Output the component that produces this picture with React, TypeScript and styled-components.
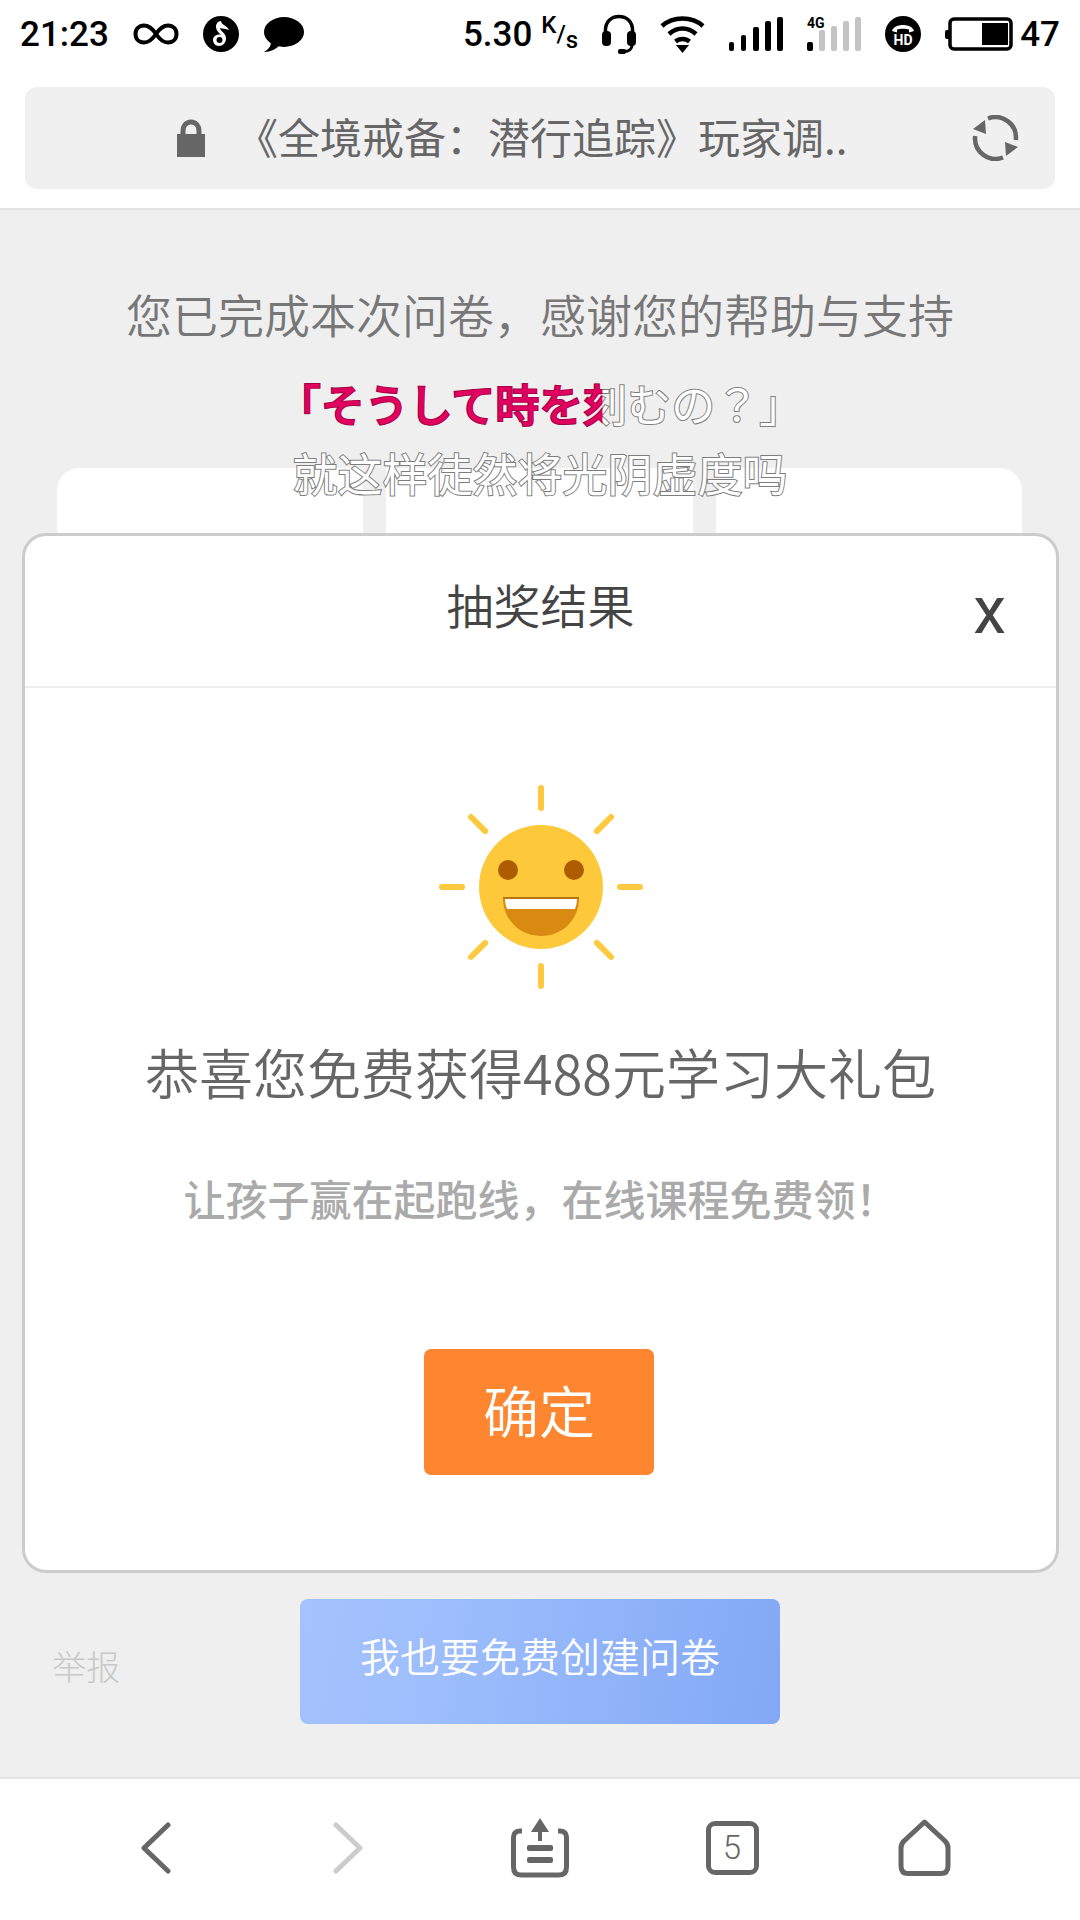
import React from "react"
import styled, { createGlobalStyle } from "styled-components"

const GlobalStyle = createGlobalStyle`
    html, body {
        margin: 0;
        padding: 0;
        background: #efefef;
    }

    * {
        box-sizing: border-box;
    }
`

const cjk = `"Noto Sans CJK SC", "Noto Sans", sans-serif`

function InfinityIcon() {
    return (
        <svg width="46" height="22" viewBox="0 0 46 22">
            <path d="M23 11C19 5 15 2.500 11 2.500C6 2.500 2.500 6 2.500 11C2.500 16 6 19.500 11 19.500C15 19.500 19 17 23 11C27 5 31 2.500 35 2.500C40 2.500 43.500 6 43.500 11C43.500 16 40 19.500 35 19.500C31 19.500 27 17 23 11Z" fill="none" stroke="#000" strokeWidth="4" />
        </svg>
    )
}

function MusicIcon() {
    return (
        <svg width="36" height="36" viewBox="0 0 36 36">
            <circle cx="18" cy="18" r="18" fill="#000" />
            <path d="M18 5C18 9 25 10 26 14C23 13 19 12.500 17 12C17 15 23 17 23 22.500C23 26.500 20 30 16 30C12.500 30 10 27 10 24C10 20.500 13 18 18 18.500C15 16.500 13 14 13 10.500C13 8 15 5 18 5Z" fill="#fff" />
            <circle cx="16.500" cy="24" r="3" fill="#000" />
        </svg>
    )
}

function ChatIcon() {
    return (
        <svg width="41" height="35" viewBox="0 0 41 35">
            <ellipse cx="21" cy="15" rx="20" ry="15" fill="#000" />
            <path d="M8 24C8 29 6 32 1 35C8 35 13 32 17 28Z" fill="#000" />
        </svg>
    )
}

function HeadsetIcon() {
    return (
        <svg width="34" height="40" viewBox="0 0 34 40">
            <path d="M3.500 18V16C3.500 8 9 2.500 17 2.500C25 2.500 30.500 8 30.500 16V18" fill="none" stroke="#000" strokeWidth="3.500" />
            <rect x="0" y="17" width="9" height="15" rx="4" fill="#000" />
            <rect x="25" y="17" width="9" height="15" rx="4" fill="#000" />
            <path d="M30 31C30 35 27 37.500 22 37.500H17" fill="none" stroke="#000" strokeWidth="3" />
            <rect x="16" y="35" width="8" height="5" rx="2" fill="#000" />
        </svg>
    )
}

function WifiIcon() {
    return (
        <svg width="45" height="38" viewBox="0 0 45 38">
            <path d="M2 11C13 1 32 1 43 11" fill="none" stroke="#000" strokeWidth="4.500" />
            <path d="M9 19C17 11.500 28 11.500 36 19" fill="none" stroke="#000" strokeWidth="4.500" />
            <path d="M15.500 26.500C19.500 23 25.500 23 29.500 26.500" fill="none" stroke="#000" strokeWidth="4.500" />
            <path d="M16 30H29L22.500 38Z" fill="#000" />
        </svg>
    )
}

function SignalIcon() {
    return (
        <svg width="54" height="34" viewBox="0 0 54 34">
            <rect x="0" y="25" width="5" height="9" rx="2" fill="#000" />
            <rect x="12" y="18" width="5" height="16" rx="2" fill="#000" />
            <rect x="24" y="10" width="6" height="24" rx="2" fill="#000" />
            <rect x="36" y="4" width="6" height="30" rx="2" fill="#000" />
            <rect x="48" y="0" width="6" height="34" rx="2" fill="#000" />
        </svg>
    )
}

function MobileDataIcon() {
    return (
        <svg width="54" height="34" viewBox="0 0 54 34" overflow="visible">
            <text x="0" y="11" fontFamily="Roboto, sans-serif" fontSize="14" fontWeight="700" fill="#000">4G</text>
            <rect x="0" y="25" width="6" height="9" rx="2" fill="#000" />
            <rect x="12" y="13" width="6" height="21" rx="2" fill="#c4c4c4" />
            <rect x="24" y="9" width="6" height="25" rx="2" fill="#c4c4c4" />
            <rect x="36" y="4" width="6" height="30" rx="2" fill="#c4c4c4" />
            <rect x="48" y="0" width="6" height="34" rx="2" fill="#c4c4c4" />
        </svg>
    )
}

function HdCallIcon() {
    return (
        <svg width="36" height="36" viewBox="0 0 36 36">
            <circle cx="18" cy="18" r="18" fill="#000" />
            <path d="M7 15C9 7 27 7 29 15L24 16.500V13.500C21 12.500 15 12.500 12 13.500V16.500Z" fill="#fff" />
            <text x="18" y="29" textAnchor="middle" fontFamily="Roboto, sans-serif" fontSize="14" fontWeight="700" fill="#fff">HD</text>
        </svg>
    )
}

function BatteryIcon() {
    return (
        <svg width="68" height="34" viewBox="0 0 68 34">
            <rect x="5" y="2" width="61" height="30" rx="4" fill="none" stroke="#000" strokeWidth="3.500" />
            <rect x="0" y="13" width="5" height="9" rx="2" fill="#000" />
            <rect x="37" y="6" width="26" height="22" fill="#000" />
        </svg>
    )
}

function LockIcon() {
    return (
        <svg width="28" height="38" viewBox="0 0 28 38">
            <path d="M6 17V12C6 7 9 3 14 3C19 3 22 7 22 12V17" fill="none" stroke="#666" strokeWidth="5" />
            <rect x="0" y="15" width="28" height="23" fill="#666" />
        </svg>
    )
}

function ReloadIcon() {
    return (
        <svg width="47" height="46" viewBox="0 0 47 46">
            <path d="M16 3.500A20.500 20.500 0 0 1 43.800 25" fill="none" stroke="#666" strokeWidth="4.500" />
            <path d="M31 42.500A20.500 20.500 0 0 1 3.200 21" fill="none" stroke="#666" strokeWidth="4.500" />
            <path d="M1 14L13 5L14 19Z" fill="#666" />
            <path d="M46 32L34 41L33 27Z" fill="#666" />
        </svg>
    )
}

function SunFace() {
    const rays = [0, 45, 90, 135, 180, 225, 270, 315]

    return (
        <svg width="210" height="210" viewBox="0 0 210 210">
            {rays.map((angle) => (
                <line
                    key={angle}
                    x1="105"
                    y1="6"
                    x2="105"
                    y2="26"
                    stroke="#fdc93f"
                    strokeWidth="6"
                    strokeLinecap="round"
                    transform={`rotate(${angle} 105 105)`}
                />
            ))}
            <circle cx="105" cy="105" r="62" fill="#fdc93b" />
            <circle cx="72" cy="88" r="10" fill="#ad5d00" />
            <circle cx="138" cy="88" r="10" fill="#ad5d00" />
            <path d="M67 116H143C143 138 126 154 105 154C84 154 67 138 67 116Z" fill="#d98a10" />
            <path d="M69 117H141C141 121 140 124 139 127H71C70 124 69 121 69 117Z" fill="#fff" />
            <path d="M67 116H143" stroke="#b9760e" strokeWidth="2" />
        </svg>
    )
}

function BackIcon() {
    return (
        <svg width="30" height="52" viewBox="0 0 30 52">
            <path d="M27 3L3 26L27 49" fill="none" stroke="#666" strokeWidth="5" strokeLinecap="round" strokeLinejoin="round" />
        </svg>
    )
}

function ForwardIcon() {
    return (
        <svg width="30" height="52" viewBox="0 0 30 52">
            <path d="M3 3L27 26L3 49" fill="none" stroke="#ccc" strokeWidth="5" strokeLinecap="round" strokeLinejoin="round" />
        </svg>
    )
}

function ShareIcon() {
    return (
        <svg width="58" height="60" viewBox="0 0 58 60">
            <path d="M29 0L38 14H20Z" fill="#666" />
            <rect x="27" y="12" width="4" height="11" fill="#666" />
            <path d="M11 13H9C5 13 2.500 15.500 2.500 19V49C2.500 54 5 57 10 57H48C53 57 55.500 54 55.500 49V19C55.500 15.500 53 13 49 13H47" fill="none" stroke="#666" strokeWidth="5" />
            <rect x="16" y="27" width="26" height="6" rx="2" fill="#666" />
            <rect x="16" y="39" width="26" height="6" rx="2" fill="#666" />
        </svg>
    )
}

function HomeIcon() {
    return (
        <svg width="53" height="57" viewBox="0 0 53 57">
            <path d="M26.500 3L47 22C49 24 50 26 50 29V47C50 52 48 54.500 43 54.500H10C5 54.500 3 52 3 47V29C3 26 4 24 6 22Z" fill="none" stroke="#666" strokeWidth="5" strokeLinejoin="round" />
        </svg>
    )
}

function App(): React.JSX.Element {
    return (
        <ScreenSCP>
            <GlobalStyle />

            <StatusBarSCP>
                <StatusGroupSCP>
                    <ClockSCP>21:23</ClockSCP>
                    <InfinityIcon />
                    <MusicIcon />
                    <ChatIcon />
                </StatusGroupSCP>
                <StatusGroupSCP>
                    <SpeedSCP>
                        5.30
                        <SpeedUnitSCP><sup>K</sup>/<sub>s</sub></SpeedUnitSCP>
                    </SpeedSCP>
                    <HeadsetIcon />
                    <WifiIcon />
                    <SignalIcon />
                    <MobileDataIcon />
                    <HdCallIcon />
                    <BatterySCP>
                        <BatteryIcon />
                        <ClockSCP>47</ClockSCP>
                    </BatterySCP>
                </StatusGroupSCP>
            </StatusBarSCP>

            <AddressWrapSCP>
                <AddressBarSCP>
                    <LockIcon />
                    <PageTitleSCP>《全境戒备&#xFF1A;潜行追踪》玩家调..</PageTitleSCP>
                    <ReloadSlotSCP>
                        <ReloadIcon />
                    </ReloadSlotSCP>
                </AddressBarSCP>
            </AddressWrapSCP>

            <MainSCP>
                <ThanksSCP>您已完成本次问卷&#xFF0C;感谢您的帮助与支持</ThanksSCP>
                <CardRowSCP>
                    <CardSCP />
                    <CardSCP />
                    <CardSCP />
                </CardRowSCP>
                <FooterSCP>
                    <ReportSCP>举报</ReportSCP>
                    <CreateButtonSCP>我也要免费创建问卷</CreateButtonSCP>
                </FooterSCP>
            </MainSCP>

            <BottomNavSCP>
                <BackIcon />
                <ForwardIcon />
                <ShareIcon />
                <TabCountSCP>5</TabCountSCP>
                <HomeIcon />
            </BottomNavSCP>

            {/* karaoke subtitles float over the page */}
            <LyricsSCP>
                <JapaneseLineSCP lang="ja">
                    「そうして時を刻むの&#xFF1F;」
                    <SungPartSCP $unsung={201} aria-hidden="true">「そうして時を刻むの&#xFF1F;」</SungPartSCP>
                </JapaneseLineSCP>
                <ChineseLineSCP>就这样徒然将光阴虚度吗</ChineseLineSCP>
            </LyricsSCP>

            <ModalSCP>
                <ModalHeaderSCP>
                    <span />
                    <ModalTitleSCP>抽奖结果</ModalTitleSCP>
                    <CloseSCP>x</CloseSCP>
                </ModalHeaderSCP>
                <ModalBodySCP>
                    <SunFace />
                    <PrizeSCP>恭喜您免费获得488元学习大礼包</PrizeSCP>
                    <SloganSCP>让孩子赢在起跑线&#xFF0C;在线课程免费领&#xFF01;</SloganSCP>
                    <ConfirmSCP>确定</ConfirmSCP>
                </ModalBodySCP>
            </ModalSCP>
        </ScreenSCP>
    )
}

export default App

const ScreenSCP = styled.div`
    position: relative;
    width: 1080px;
    height: 1920px;
    display: flex;
    flex-direction: column;
    overflow: hidden;
    background: #efefef;
    font-family: ${cjk};
`

const StatusBarSCP = styled.div`
    height: 68px;
    padding: 0 20px 0 20px;
    display: flex;
    align-items: center;
    justify-content: space-between;
    background: #ffffff;
`

const StatusGroupSCP = styled.div`
    display: flex;
    align-items: center;
    gap: 24px;
`

const ClockSCP = styled.span`
    font-family: Roboto, sans-serif;
    font-size: 35px;
    font-weight: 500;
    color: #000000;
`

const SpeedSCP = styled.span`
    display: flex;
    align-items: center;
    gap: 9px;
    font-family: Roboto, sans-serif;
    font-size: 35px;
    font-weight: 500;
    color: #000000;
`

const SpeedUnitSCP = styled.span`
    font-size: 24px;
    font-weight: 500;

    sup, sub {
        font-size: 24px;
        line-height: 0;
    }
`

const BatterySCP = styled.div`
    display: flex;
    align-items: center;
    gap: 7px;
`

const AddressWrapSCP = styled.div`
    height: 142px;
    padding: 19px 25px 0 25px;
    background: #ffffff;
    border-bottom: 2px solid #e4e4e4;
`

const AddressBarSCP = styled.div`
    height: 102px;
    padding: 0 36px 0 152px;
    display: flex;
    align-items: center;
    border-radius: 12px;
    background: #f0f0f0;
`

const PageTitleSCP = styled.span`
    margin-left: 31px;
    padding-bottom: 6px;
    font-size: 42px;
    font-weight: 400;
    color: #666666;
    white-space: nowrap;
`

const ReloadSlotSCP = styled.span`
    margin-left: auto;
    display: flex;
`

const MainSCP = styled.div`
    flex: 1;
    display: flex;
    flex-direction: column;
    padding: 73px 0 53px;
    min-height: 0;
`

const ThanksSCP = styled.div`
    height: 60px;
    line-height: 60px;
    text-align: center;
    font-size: 46px;
    font-weight: 350;
    color: #777777;
`

const CardRowSCP = styled.div`
    margin-top: 125px;
    padding: 0 58px 0 57px;
    display: grid;
    grid-template-columns: repeat(3, 1fr);
    gap: 23px;
`

const CardSCP = styled.div`
    height: 300px;
    background: #ffffff;

    &:first-child {
        border-top-left-radius: 22px;
    }

    &:last-child {
        border-top-right-radius: 22px;
    }
`

const FooterSCP = styled.div`
    margin-top: auto;
    display: grid;
    grid-template-columns: 1fr 480px 1fr;
    align-items: center;
`

const ReportSCP = styled.span`
    padding: 8px 0 0 52px;
    font-size: 34px;
    font-weight: 300;
    color: #c8c8c8;
`

const CreateButtonSCP = styled.div`
    height: 125px;
    padding-bottom: 14px;
    display: flex;
    align-items: center;
    justify-content: center;
    border-radius: 8px;
    background: linear-gradient(100deg, #a4c2fd 0%, #9dbdfc 30%, #82a8f5 100%);
    font-size: 40px;
    font-weight: 350;
    color: #ffffff;
`

const BottomNavSCP = styled.div`
    height: 143px;
    padding-bottom: 4px;
    display: grid;
    grid-template-columns: repeat(5, 192px);
    justify-content: center;
    justify-items: center;
    align-items: center;
    background: #ffffff;
    border-top: 2px solid #e4e4e4;
`

const TabCountSCP = styled.div`
    width: 53px;
    height: 54px;
    display: flex;
    align-items: center;
    justify-content: center;
    border: 5px solid #666666;
    border-radius: 9px;
    font-family: Roboto, sans-serif;
    font-size: 33px;
    font-weight: 300;
    color: #666666;
`

const LyricsSCP = styled.div`
    position: absolute;
    top: 367px;
    left: 0;
    width: 100%;
    display: flex;
    flex-direction: column;
    align-items: center;
    pointer-events: none;
`

const JapaneseLineSCP = styled.div`
    position: relative;
    height: 74px;
    line-height: 72px;
    white-space: nowrap;
    font-family: "Noto Sans CJK JP", sans-serif;
    font-size: 44px;
    color: #ffffff;
    -webkit-text-stroke: 2px #7d7d7d;
    paint-order: stroke fill;
`

const SungPartSCP = styled.span<{ $unsung: number }>`
    position: absolute;
    top: 0;
    left: 0;
    clip-path: inset(0 ${(props) => props.$unsung}px 0 0);
    font-weight: 500;
    color: #e0005f;
    -webkit-text-stroke: 2px #a80046;
    paint-order: stroke fill;
`

const ChineseLineSCP = styled.div`
    height: 64px;
    line-height: 64px;
    white-space: nowrap;
    font-size: 45px;
    color: #ffffff;
    -webkit-text-stroke: 2px #7d7d7d;
    paint-order: stroke fill;
`

const ModalSCP = styled.div`
    position: absolute;
    top: 533px;
    left: 22px;
    width: 1037px;
    height: 1040px;
    display: flex;
    flex-direction: column;
    background: #ffffff;
    border: 3px solid #cccccc;
    border-radius: 24px;
`

const ModalHeaderSCP = styled.div`
    height: 152px;
    padding: 0 50px 16px;
    display: grid;
    grid-template-columns: 1fr auto 1fr;
    align-items: center;
    border-bottom: 2px solid #eeeeee;
`

const ModalTitleSCP = styled.span`
    font-size: 47px;
    font-weight: 350;
    color: #444444;
`

const CloseSCP = styled.span`
    justify-self: end;
    margin-top: 16px;
    font-family: Roboto, sans-serif;
    font-size: 66px;
    font-weight: 400;
    line-height: 1;
    color: #444444;
`

const ModalBodySCP = styled.div`
    padding-top: 94px;
    display: flex;
    flex-direction: column;
    align-items: center;
`

const PrizeSCP = styled.div`
    margin-top: 50px;
    height: 60px;
    line-height: 60px;
    font-size: 54px;
    font-weight: 350;
    color: #666666;
`

const SloganSCP = styled.div`
    margin-top: 71px;
    height: 50px;
    line-height: 50px;
    font-size: 42px;
    font-weight: 500;
    color: #aaaaaa;
`

const ConfirmSCP = styled.div`
    margin: 126px 3px 0 0;
    width: 230px;
    height: 126px;
    padding-bottom: 8px;
    display: flex;
    align-items: center;
    justify-content: center;
    border-radius: 7px;
    background: #ff8630;
    font-size: 56px;
    font-weight: 350;
    color: #ffffff;
`
